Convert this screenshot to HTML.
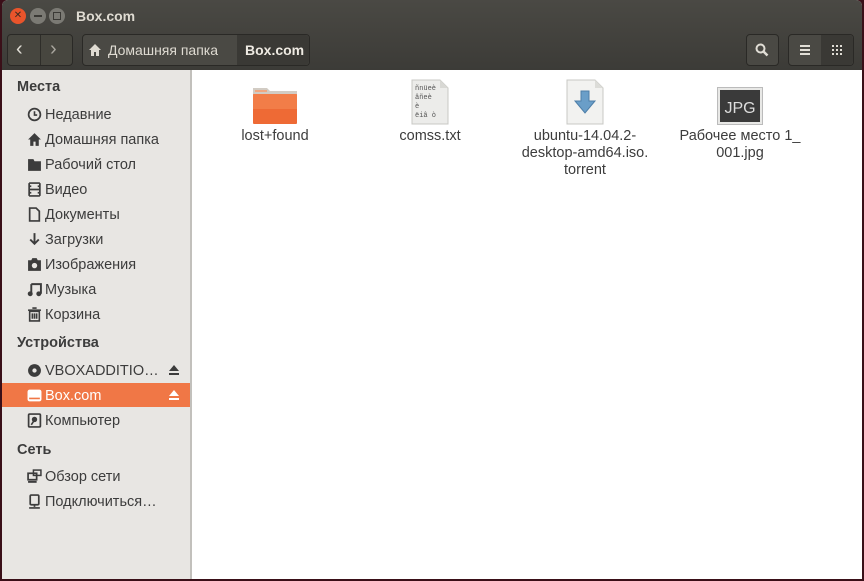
<!DOCTYPE html>
<html><head><meta charset="utf-8"><style>
*{margin:0;padding:0;box-sizing:border-box}
body{width:864px;height:581px;background:#3a0f18;font-family:"Liberation Sans","DejaVu Sans",sans-serif;position:relative;overflow:hidden}
.win{position:absolute;left:2px;top:0;width:860px;height:579px;background:#fff;border-radius:6px 6px 0 0;overflow:hidden}
.hdr{position:absolute;left:0;top:0;width:860px;height:70px;background:linear-gradient(#4a4944,#3c3b37)}
.t{position:absolute;color:#dfdbd2;font-size:14px;white-space:nowrap}
.btn{position:absolute;border:1px solid #2a2926;border-radius:4px;background:#46453f}
.side{position:absolute;left:0;top:70px;width:190px;height:509px;background:#e8e6e3;border-right:2px solid #c2c0bc}
.s{position:absolute;left:43px;font-size:14.5px;color:#3c3c3c;white-space:nowrap;line-height:18px}
.h{position:absolute;left:15px;font-size:14.5px;font-weight:bold;color:#3c3c3c;line-height:18px}
.ic{position:absolute;left:25px;width:15px;height:15px}
.f{position:absolute;font-size:14.5px;color:#3c3c3c;text-align:center;line-height:17px}
</style></head><body>
<div class="win">
<div class="hdr">
  <div style="position:absolute;left:8px;top:8px;width:16px;height:16px;border-radius:50%;background:#e9542b;color:#3a2a20;font-size:10px;text-align:center;line-height:16px">✕</div>
  <div style="position:absolute;left:28px;top:8px;width:16px;height:16px;border-radius:50%;background:#7b7a74"><div style="position:absolute;left:4px;top:7px;width:8px;height:2px;background:#3a3935"></div></div>
  <div style="position:absolute;left:47px;top:8px;width:16px;height:16px;border-radius:50%;background:#7b7a74"><div style="position:absolute;left:4px;top:4px;width:8px;height:8px;border:1px solid #3a3935"></div></div>
  <div class="t" style="left:74px;top:8px;font-weight:bold">Box.com</div>
  <div class="btn" style="left:5px;top:34px;width:66px;height:32px;background:#47463f"></div>
  <div style="position:absolute;left:38px;top:35px;width:1px;height:30px;background:#2e2d29"></div>
  <div class="t" style="left:14px;top:38px;font-size:20px;color:#e0ddd5">‹</div>
  <div class="t" style="left:48px;top:38px;font-size:20px;color:#a9a69e">›</div>
  <div class="btn" style="left:80px;top:34px;width:228px;height:32px;background:#4a4944"></div>
  <div style="position:absolute;left:235px;top:35px;width:72px;height:30px;background:#3a3935;border-radius:0 4px 4px 0"></div>
  <svg style="position:absolute;left:86px;top:43px" width="14" height="13" viewBox="0 0 14 13"><path d="M7 1L1 7h2v6h3V9h2v4h3V7h2z" fill="#dfdbd2"/></svg>
  <div class="t" style="left:106px;top:42px">Домашняя папка</div>
  <div class="t" style="left:243px;top:42px;font-weight:bold;color:#eeeae2">Box.com</div>
  <div class="btn" style="left:744px;top:34px;width:33px;height:32px;background:#4a4944"></div>
  <svg style="position:absolute;left:752px;top:42px" width="16" height="16" viewBox="0 0 16 16"><circle cx="6.5" cy="6.5" r="4" stroke="#e0ddd5" stroke-width="2" fill="none"/><path d="M9.5 9.5l4 4" stroke="#e0ddd5" stroke-width="2.5"/></svg>
  <div class="btn" style="left:786px;top:34px;width:66px;height:32px;background:#4a4944"></div>
  <div style="position:absolute;left:819px;top:35px;width:32px;height:30px;background:#3a3935;border-radius:0 4px 4px 0"></div>
  <div style="position:absolute;left:798px;top:45px;width:10px;height:2px;background:#e0ddd5;box-shadow:0 4px 0 #e0ddd5,0 8px 0 #e0ddd5"></div>
  <svg style="position:absolute;left:830px;top:45px" width="10" height="10"><g fill="#e0ddd5"><rect x="0" y="0" width="2" height="2"/><rect x="4" y="0" width="2" height="2"/><rect x="8" y="0" width="2" height="2"/><rect x="0" y="4" width="2" height="2"/><rect x="4" y="4" width="2" height="2"/><rect x="8" y="4" width="2" height="2"/><rect x="0" y="8" width="2" height="2"/><rect x="4" y="8" width="2" height="2"/><rect x="8" y="8" width="2" height="2"/></g></svg>
</div>
<div class="side">
  <div class="h" style="top:8px">Места</div>
  <svg class="ic" style="top:37px" viewBox="0 0 14 14"><circle cx="7" cy="7" r="5.5" stroke="#3c3c3c" stroke-width="1.6" fill="none"/><path d="M7 4v3.5h2.5" stroke="#3c3c3c" stroke-width="1.5" fill="none"/></svg>
  <div class="s" style="top:36px">Недавние</div>
  <svg class="ic" style="top:62px" viewBox="0 0 14 14"><path d="M7 1L1 7h2v6h3V9h2v4h3V7h2z" fill="#3c3c3c"/></svg>
  <div class="s" style="top:61px">Домашняя папка</div>
  <svg class="ic" style="top:87px" viewBox="0 0 14 14"><path d="M1 2h5l1 2h6v9H1z" fill="#3c3c3c"/></svg>
  <div class="s" style="top:86px">Рабочий стол</div>
  <svg class="ic" style="top:112px" viewBox="0 0 14 14"><path d="M2 1v12M12 1v12M2 1h10M2 13h10M2 7h10M2 4h2M10 4h2M2 10h2M10 10h2" stroke="#3c3c3c" stroke-width="1.6" fill="none"/></svg>
  <div class="s" style="top:111px">Видео</div>
  <svg class="ic" style="top:137px" viewBox="0 0 14 14"><path d="M2.5 1h6l3 3v9h-9z" stroke="#3c3c3c" stroke-width="1.6" fill="none"/></svg>
  <div class="s" style="top:136px">Документы</div>
  <svg class="ic" style="top:162px" viewBox="0 0 14 14"><path d="M7 1v9M3 7l4 4 4-4" stroke="#3c3c3c" stroke-width="1.8" fill="none"/></svg>
  <div class="s" style="top:161px">Загрузки</div>
  <svg class="ic" style="top:187px" viewBox="0 0 14 14"><path d="M1 3h3l1-2h4l1 2h3v10H1z" fill="#3c3c3c"/><circle cx="7" cy="8" r="2.5" fill="#e8e6e3"/></svg>
  <div class="s" style="top:186px">Изображения</div>
  <svg class="ic" style="top:212px" viewBox="0 0 14 14"><path d="M4 2h9v9M4 2v9" stroke="#3c3c3c" stroke-width="1.8" fill="none"/><circle cx="3" cy="11" r="2.3" fill="#3c3c3c"/><circle cx="11" cy="11" r="2.3" fill="#3c3c3c"/></svg>
  <div class="s" style="top:211px">Музыка</div>
  <svg class="ic" style="top:237px" viewBox="0 0 14 14"><path d="M1 3h12M5 1h4M2.5 4h9v9h-9zM5 6v5M7 6v5M9 6v5" stroke="#3c3c3c" stroke-width="1.5" fill="none"/></svg>
  <div class="s" style="top:236px">Корзина</div>
  <div class="h" style="top:264px">Устройства</div>
  <svg class="ic" style="top:293px" viewBox="0 0 14 14"><circle cx="7" cy="7" r="6" fill="#3c3c3c"/><circle cx="7" cy="7" r="2" fill="#e8e6e3"/></svg>
  <div class="s" style="top:292px">VBOXADDITIO…</div>
  <svg style="position:absolute;left:166px;top:294px" width="12" height="12" viewBox="0 0 12 12"><path d="M6 1l5 6H1z M1 9h10v2H1z" fill="#3c3c3c"/></svg>
  <div style="position:absolute;left:0;top:313px;width:188px;height:24px;background:#f07746"></div>
  <svg class="ic" style="top:318px" viewBox="0 0 14 14"><rect x="0.5" y="1.5" width="13" height="11" rx="2" fill="#fff"/><rect x="2" y="9" width="10" height="1.5" fill="#f07746"/></svg>
  <div class="s" style="top:317px;color:#fff">Box.com</div>
  <svg style="position:absolute;left:166px;top:319px" width="12" height="12" viewBox="0 0 12 12"><path d="M6 1l5 6H1z M1 9h10v2H1z" fill="#fff"/></svg>
  <svg class="ic" style="top:343px" viewBox="0 0 14 14"><rect x="1.5" y="1" width="11" height="12" rx="1" stroke="#3c3c3c" stroke-width="1.6" fill="none"/><circle cx="7" cy="6" r="2.5" fill="#3c3c3c"/><path d="M6 8l-2 3" stroke="#3c3c3c" stroke-width="1.5"/></svg>
  <div class="s" style="top:342px">Компьютер</div>
  <div class="h" style="top:371px">Сеть</div>
  <svg class="ic" style="top:399px" viewBox="0 0 14 14"><rect x="1" y="4" width="8" height="6" stroke="#3c3c3c" stroke-width="1.6" fill="none"/><rect x="6" y="1" width="7" height="5" stroke="#3c3c3c" stroke-width="1.4" fill="none"/><path d="M1 12h8" stroke="#3c3c3c" stroke-width="1.8"/></svg>
  <div class="s" style="top:398px">Обзор сети</div>
  <svg class="ic" style="top:424px" viewBox="0 0 14 14"><rect x="3" y="1" width="8" height="9" rx="1" stroke="#3c3c3c" stroke-width="1.6" fill="none"/><path d="M7 10v2M2 13h10" stroke="#3c3c3c" stroke-width="1.6"/></svg>
  <div class="s" style="top:423px">Подключиться…</div>
</div>
<svg style="position:absolute;left:249px;top:85px" width="48" height="40" viewBox="0 0 48 40"><path d="M2 3h14l3 3h27v32H2z" fill="#d2ccc4"/><path d="M4 6h12" stroke="#f0a882" stroke-width="2"/><rect x="2" y="9" width="44" height="30" rx="1" fill="#ee6a35"/><rect x="2" y="9" width="44" height="15" fill="#f58a55" opacity=".6"/></svg>
<div class="f" style="left:220px;top:128px;width:106px">lost+found</div>
<svg style="position:absolute;left:409px;top:79px" width="38" height="46" viewBox="0 0 38 46"><path d="M1 1h28l8 8v36H1z" fill="#ececea" stroke="#c8c8c4"/><path d="M29 1v8h8" fill="#d8d8d4"/><text x="4" y="11" font-size="7" font-family="Liberation Mono" fill="#555">ñnüeè</text><text x="4" y="20" font-size="7" font-family="Liberation Mono" fill="#555">âñeè</text><text x="4" y="29" font-size="7" font-family="Liberation Mono" fill="#555">è</text><text x="4" y="38" font-size="7" font-family="Liberation Mono" fill="#555">ëiâ ò</text></svg>
<div class="f" style="left:375px;top:128px;width:106px">comss.txt</div>
<svg style="position:absolute;left:564px;top:79px" width="38" height="46" viewBox="0 0 38 46"><path d="M1 1h28l8 8v36H1z" fill="#f2f2f0" stroke="#c8c8c4"/><path d="M29 1v8h8" fill="#dcdcd8"/><path d="M15 12h8v10h6l-10 12-10-12h6z" fill="#6a9ec8" stroke="#4d7ea8"/></svg>
<div class="f" style="left:513px;top:128px;width:140px">ubuntu-14.04.2-<br>desktop-amd64.iso.<br>torrent</div>
<svg style="position:absolute;left:715px;top:87px" width="46" height="38" viewBox="0 0 46 38"><rect x="0.5" y="0.5" width="45" height="37" fill="#e8e8e6" stroke="#bbb"/><rect x="3" y="3" width="40" height="32" fill="#3a3a3a"/><text x="23" y="26" text-anchor="middle" font-size="16" font-family="Liberation Sans" fill="#ddd">JPG</text></svg>
<div class="f" style="left:668px;top:128px;width:140px">Рабочее место 1_<br>001.jpg</div>
</div>
</body></html>
